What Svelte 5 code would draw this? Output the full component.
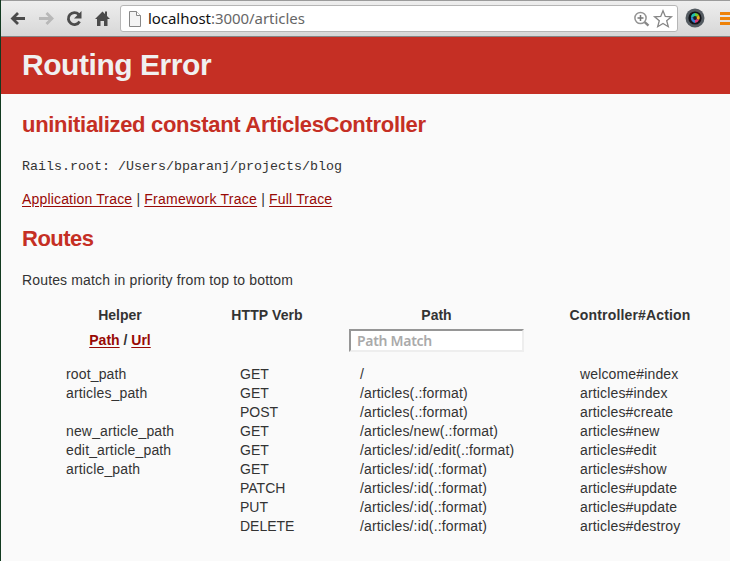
<script>
  const routes = [
    ['root_path', 'GET', '/', 'welcome#index'],
    ['articles_path', 'GET', '/articles(.:format)', 'articles#index'],
    ['', 'POST', '/articles(.:format)', 'articles#create'],
    ['new_article_path', 'GET', '/articles/new(.:format)', 'articles#new'],
    ['edit_article_path', 'GET', '/articles/:id/edit(.:format)', 'articles#edit'],
    ['article_path', 'GET', '/articles/:id(.:format)', 'articles#show'],
    ['', 'PATCH', '/articles/:id(.:format)', 'articles#update'],
    ['', 'PUT', '/articles/:id(.:format)', 'articles#update'],
    ['', 'DELETE', '/articles/:id(.:format)', 'articles#destroy']
  ];
</script>

<div class="window">
  <div class="toolbar">
    <svg class="nav" width="112" height="32" viewBox="0 0 112 32" fill="none">
      <g stroke-width="2.8">
        <path d="M25 16.5H12M18 11l-5.500 5.500L18 22" stroke="#4b4b4b" />
        <path d="M39 16.500h13M46.500 11l5.500 5.500-5.500 5.500" stroke="#b8b8b8" />
        <path d="M78.800 12.500A6 6 0 1 0 79.600 19.500" stroke="#4b4b4b" />
      </g>
      <path d="M81.500 9v7.500h-7.500z" fill="#4b4b4b" />
      <path d="M95 17L102.500 9.500l2.500 2.500V9.500h2v4.500l3 3h-2.500V24H104v-5h-3.500v5H97v-7z" fill="#4b4b4b" />
    </svg>
    <div class="address">
      <svg width="12" height="16" viewBox="0 0 12 16">
        <path d="M.5.5h7l4 4v11H.5z" fill="#f4f4f4" stroke="#878787" />
        <path d="M7.500.5v4h4" fill="#fff" stroke="#878787" />
      </svg>
      <span class="url"><b>localhost</b>:3000/articles</span>
      <svg class="actions" width="42" height="22" viewBox="0 0 42 22" fill="none">
        <circle cx="7.500" cy="10" r="5.600" stroke="#949494" stroke-width="1.500" />
        <path d="M4.500 10h6M7.500 7v6" stroke="#777" stroke-width="1.500" />
        <path d="M11.700 14.200l3.800 3.500" stroke="#888" stroke-width="2.400" />
        <path d="M30 2.700l2.300 5.700 6.100.4-4.700 3.900 1.600 6-5.300-3.300-5.300 3.300 1.600-6-4.700-3.900 6.100-.4z" fill="#fff" stroke="#858585" stroke-width="1.300" />
      </svg>
    </div>
    <svg class="lens" width="20" height="20" viewBox="0 0 20 20">
      <circle cx="10" cy="10" r="9.500" fill="#535a60" />
      <circle cx="10" cy="10" r="6.600" fill="#111318" />
      <path d="M10 10L6 9a4.500 4.500 0 0 1 4-4z" fill="#20bfaf" />
      <path d="M10 10V5a5 5 0 0 1 4 2z" fill="#6bce39" />
      <path d="M10 10l4-3a5 5 0 0 1 0 5z" fill="#f0b21b" />
      <path d="M10 10l4 2a5 5 0 0 1-4 3z" fill="#d83a78" />
      <path d="M10 10v5a5 5 0 0 1-4-6z" fill="#397fd2" />
      <circle cx="10" cy="10" r="1.900" fill="#17202b" />
    </svg>
    <div class="menu"><i></i><i></i><i></i></div>
  </div>

  <header><h1>Routing Error</h1></header>
  <main>
    <h2 class="message">uninitialized constant ArticlesController</h2>
    <pre>Rails.root: /Users/bparanj/projects/blog</pre>
    <div class="traces"><a href="#app">Application Trace</a><span>|</span><a href="#framework">Framework Trace</a><span>|</span><a href="#full">Full Trace</a></div>
    <h2 class="routes-title">Routes</h2>
    <p>Routes match in priority from top to bottom</p>
    <div class="table">
      <div class="row heads">
        <div class="h1c">Helper</div><div class="h2c">HTTP Verb</div><div class="h3c">Path</div><div class="h4c">Controller#Action</div>
      </div>
      <div class="row filters">
        <div class="h1c"><a href="#path">Path</a> / <a href="#url">Url</a></div><div></div>
        <div class="search"><input placeholder="Path Match" aria-label="Path Match" /></div><div></div>
      </div>
      {#each routes as route}
        <div class="row entry">
          {#each route as value}<div>{value}</div>{/each}
        </div>
      {/each}
    </div>
  </main>
</div>

<style>
  :global(body) { margin: 0; overflow: hidden; }
  .window { box-sizing: border-box; width: 730px; height: 561px; overflow: hidden; background: #fafafa; border-left: 1px solid #123a20; color: #333; font: 14px/19px "Liberation Sans", Arial, sans-serif; }
  .toolbar { box-sizing: border-box; height: 37px; display: flex; align-items: flex-start; padding-top: 5px; background: linear-gradient(#eee, #d7d7d7); border-top: 1px solid #9b9b9b; border-bottom: 1px solid #858585; }
  .nav { flex: none; margin: -4px 8px 0 -1px; }
  .address { box-sizing: border-box; width: 558px; height: 27px; margin-top: -1px; border: 1px solid #b6b6b6; border-radius: 3px; background: white; display: flex; align-items: center; padding-left: 8px; flex: none; }
  .url { margin-left: 7px; font: 15px/23px "Noto Sans", sans-serif; letter-spacing: -.05px; color: #666; white-space: nowrap; }
  .url b { color: #111; font-weight: 400; }
  .actions { margin: 0 2px 0 auto; }
  .lens { margin: 2px 15px 0 7px; flex: none; }
  .menu { width: 10px; display: flex; flex-direction: column; gap: 2px; padding-top: 6px; }
  .menu i { height: 3px; background: #ee8208; }
  header { height: 57px; background: #c52f24; padding-left: 21px; }
  h1, h2, p, pre { margin: 0; white-space: nowrap; }
  h1 { font-size: 30px; line-height: 55px; color: #f0f0f0; letter-spacing: -.45px; }
  main { padding-left: 21px; }
  h2 { color: #c52f24; font-size: 22px; line-height: 26px; }
  .message { padding-top: 18px; letter-spacing: -.3px; }
  pre { padding-top: 19px; font: 13.330px/19px "Liberation Mono", monospace; }
  .traces { padding-top: 14px; display: flex; }
  .traces a { letter-spacing: .17px; }
  .traces a:nth-of-type(2) { letter-spacing: .26px; }
  .traces span { width: 12px; text-align: center; }
  a { color: #980905; text-underline-offset: 2px; text-decoration-thickness: 1px; }
  .routes-title { padding-top: 17px; letter-spacing: -.5px; }
  p { padding-top: 19px; letter-spacing: .15px; }
  .row { display: grid; grid-template-columns: 174px 120px 220px 150px; padding-left: 44px; white-space: nowrap; }
  .heads { padding-top: 16px; height: 19px; font-weight: bold; }
  .h1c { width: 108px; text-align: center; font-weight: bold; }
  .h2c { width: 54px; display: flex; justify-content: center; letter-spacing: .1px; }
  .h3c { width: 153px; text-align: center; }
  .h4c { width: 100px; display: flex; justify-content: center; letter-spacing: .15px; }
  .filters { height: 36px; padding-top: 4px; }
  .filters .h1c { padding-top: 2px; }
  .search { margin-left: -11px; }
  input { box-sizing: border-box; display: block; width: 175px; height: 23px; padding: 0 6px; border: 2px solid; border-color: #969696 #eee #eee #969696; background: white; font: 600 14px/18px "Noto Sans", sans-serif; letter-spacing: -.3px; }
  input::placeholder { color: #aaa; opacity: 1; }
  .entry { height: 19px; letter-spacing: .15px; }
  .entry div:nth-child(2) { letter-spacing: 0; }
</style>
